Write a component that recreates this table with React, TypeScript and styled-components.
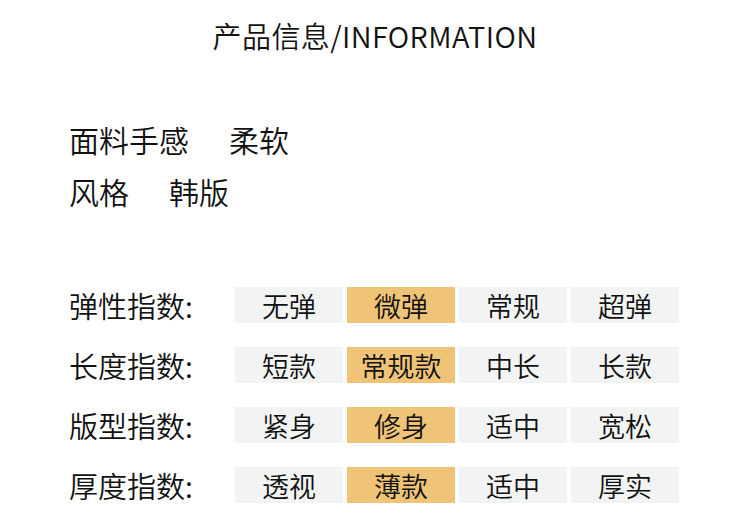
import React, { ReactElement } from 'react';
import styled, { createGlobalStyle } from 'styled-components';

const INFO = [
  { name: '面料手感', value: '柔软' },
  { name: '风格', value: '韩版' },
];

const INDEXES = [
  { label: '弹性指数:', options: ['无弹', '微弹', '常规', '超弹'], active: 1 },
  { label: '长度指数:', options: ['短款', '常规款', '中长', '长款'], active: 1 },
  { label: '版型指数:', options: ['紧身', '修身', '适中', '宽松'], active: 1 },
  { label: '厚度指数:', options: ['透视', '薄款', '适中', '厚实'], active: 1 },
];

function App(): ReactElement {
  return (
    <>
      <GlobalStyle />
      <Page>
        <Title>产品信息/INFORMATION</Title>
        <InfoList>
          {INFO.map(({ name, value }) => (
            <InfoRow key={name}>
              <span>{name}</span>
              <span>{value}</span>
            </InfoRow>
          ))}
        </InfoList>
        <IndexList>
          {INDEXES.map(({ label, options, active }) => (
            <IndexRow key={label}>
              <IndexLabel>{label}</IndexLabel>
              {options.map((option, i) => (
                <IndexCell key={option + i} active={i === active}>
                  {option}
                </IndexCell>
              ))}
            </IndexRow>
          ))}
        </IndexList>
      </Page>
    </>
  );
}

const GlobalStyle = createGlobalStyle`
  body {
    margin: 0;
    background: #fff;
    font-family: "Noto Sans CJK SC", "Noto Sans", sans-serif;
    font-weight: 350;
    color: #111;
  }
`;

const Page = styled.div`
  width: 750px;
  height: 532px;
  overflow: hidden;
  background: #fff;
`;

const Title = styled.h1`
  margin: 0;
  padding-top: 14px;
  text-align: center;
  font-size: 29px;
  font-weight: 350;
  line-height: 42px;
  letter-spacing: 0.4px;
`;

const InfoList = styled.div`
  padding: 57px 0 0 69px;
  display: flex;
  flex-direction: column;
`;

const InfoRow = styled.div`
  display: flex;
  gap: 40px;
  font-size: 30px;
  line-height: 52px;
`;

const IndexList = styled.div`
  padding: 70px 0 0 69px;
  display: flex;
  flex-direction: column;
  gap: 24px;
`;

const IndexRow = styled.div`
  display: grid;
  grid-template-columns: 162px repeat(4, 108px);
  column-gap: 4px;
  align-items: center;
  height: 36px;
`;

const IndexLabel = styled.div`
  font-size: 29px;
  line-height: 36px;
  margin-right: -4px;
`;

const IndexCell = styled.div<{ active: boolean }>`
  height: 36px;
  display: flex;
  align-items: center;
  justify-content: center;
  font-size: 27px;
  background: ${({ active }) => (active ? '#f0c476' : '#f2f4f3')};
`;

export default App;
